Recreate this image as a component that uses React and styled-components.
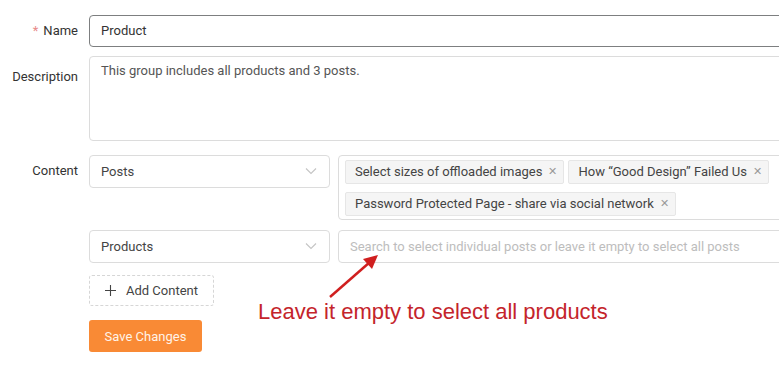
import styled, { createGlobalStyle } from "styled-components";

const Global = createGlobalStyle`
  html, body {
    margin: 0;
    background: #fff;
    overflow: hidden;
  }
  body {
    font-family: Roboto, "Liberation Sans", Arial, sans-serif;
    font-size: 13px;
    color: #333;
  }
`;

const Page = styled.div`
  position: relative;
  width: 900px;
  height: 367px;
  padding-top: 15px;
  box-sizing: border-box;
`;

const Form = styled.div`
  display: flex;
  flex-direction: column;
`;

const Row = styled.div`
  display: grid;
  grid-template-columns: 89px 1fr;
  margin-bottom: ${({ $gap }) => $gap}px;
`;

const Label = styled.div`
  text-align: right;
  padding-right: 11px;
  padding-top: ${({ $top }) => $top}px;
  font-size: 13px;
  color: #333;
  line-height: 16px;

  .req {
    color: #e88a8a;
    margin-right: 5px;
    font-size: 13px;
  }
`;

const Field = styled.div`
  display: flex;
  flex-direction: column;
  gap: ${({ $gap }) => $gap || 0}px;
`;

const Input = styled.div`
  height: 32px;
  box-sizing: border-box;
  border: 1px solid ${({ $focus }) => ($focus ? "#7d7f80" : "#dcdcdc")};
  border-radius: 4px;
  padding: 0 11px 1px;
  display: flex;
  align-items: center;
  color: #333;
`;

const TextArea = styled.div`
  height: 85px;
  box-sizing: border-box;
  border: 1px solid #dcdcdc;
  border-radius: 4px;
  padding: 6px 11px;
  color: #555;
  line-height: 16px;
`;

const Pair = styled.div`
  display: flex;
  gap: 8px;
  align-items: flex-start;
`;

const Select = styled.div`
  width: 241px;
  height: 33px;
  box-sizing: border-box;
  border: 1px solid #dcdcdc;
  border-radius: 4px;
  padding: 0 12px 1px 11px;
  display: flex;
  align-items: center;
  justify-content: space-between;
  color: #444;
  flex-shrink: 0;
`;

const Tags = styled.div`
  flex: 1;
  min-height: 65px;
  box-sizing: border-box;
  border: 1px solid #dcdcdc;
  border-radius: 4px;
  padding: 4px 6px 3px;
  display: flex;
  flex-wrap: wrap;
  align-content: flex-start;
  gap: 8px 4px;
`;

const Tag = styled.span`
  height: 24px;
  box-sizing: border-box;
  display: inline-flex;
  align-items: center;
  gap: 6px;
  padding: 0 6px 1px 9px;
  background: #f5f5f5;
  border: 1px solid #e6e6e6;
  border-radius: 2px;
  color: #444;
  font-size: 13px;

  .x {
    color: #999;
    font-size: 11px;
  }
`;

const Search = styled.div`
  flex: 1;
  height: 33px;
  box-sizing: border-box;
  border: 1px solid #dcdcdc;
  border-radius: 4px;
  padding: 0 11px 1px;
  display: flex;
  align-items: center;
  color: #bdbdbd;
`;

const AddButton = styled.button`
  width: 125px;
  height: 31px;
  border: 1px dashed #d6d6d6;
  border-radius: 3px;
  background: #fff;
  display: flex;
  align-items: center;
  justify-content: center;
  gap: 10px;
  font-family: inherit;
  font-size: 13px;
  color: #444;
  padding: 0;
`;

const SaveButton = styled.button`
  width: 113px;
  height: 32px;
  border: 0;
  border-radius: 3px;
  background: #f98a35;
  color: #fff3e8;
  font-family: inherit;
  font-size: 13px;
  padding: 0;
`;

const Note = styled.div`
  position: absolute;
  left: 258px;
  top: 299px;
  font-family: "Liberation Sans", Arial, sans-serif;
  font-size: 22px;
  color: #c4242b;
  white-space: nowrap;
`;

const Arrow = styled.svg`
  position: absolute;
  left: 320px;
  top: 245px;
`;

function Chevron() {
  return (
    <svg width="12" height="8" viewBox="0 0 12 8">
      <path d="M1 1.5 L6 6.5 L11 1.5" fill="none" stroke="#c4c4c4" strokeWidth="1.1" />
    </svg>
  );
}

function Plus() {
  return (
    <svg width="11" height="11" viewBox="0 0 11 11">
      <path d="M5.5 0 V11 M0 5.5 H11" stroke="#444" strokeWidth="1.1" />
    </svg>
  );
}

const tags = [
  "Select sizes of offloaded images",
  "How \u201cGood Design\u201d Failed Us",
  "Password Protected Page - share via social network",
];

export default function App() {
  return (
    <Page>
      <Global />
      <Form>
        <Row $gap={9}>
          <Label $top={8}>
            <span className="req">*</span>Name
          </Label>
          <Input $focus>Product</Input>
        </Row>
        <Row $gap={14}>
          <Label $top={13}>Description</Label>
          <TextArea>This group includes all products and 3 posts.</TextArea>
        </Row>
        <Row $gap={12}>
          <Label $top={8}>Content</Label>
          <Field $gap={10}>
            <Pair>
              <Select>
                Posts <Chevron />
              </Select>
              <Tags>
                {tags.map((t) => (
                  <Tag key={t}>
                    {t} <span className="x">✕</span>
                  </Tag>
                ))}
              </Tags>
            </Pair>
            <Pair>
              <Select>
                Products <Chevron />
              </Select>
              <Search>Search to select individual posts or leave it empty to select all posts</Search>
            </Pair>
          </Field>
        </Row>
        <Row $gap={14}>
          <div />
          <div>
            <AddButton>
              <Plus /> Add Content
            </AddButton>
          </div>
        </Row>
        <Row $gap={0}>
          <div />
          <div>
            <SaveButton>Save Changes</SaveButton>
          </div>
        </Row>
      </Form>
      <Arrow width="70" height="60" viewBox="0 0 70 60">
        <line x1="10" y1="52" x2="50" y2="17" stroke="#d01f1f" strokeWidth="2.5" />
        <polygon points="58,10 43,14 52,24" fill="#d01f1f" />
      </Arrow>
      <Note>Leave it empty to select all products</Note>
    </Page>
  );
}
